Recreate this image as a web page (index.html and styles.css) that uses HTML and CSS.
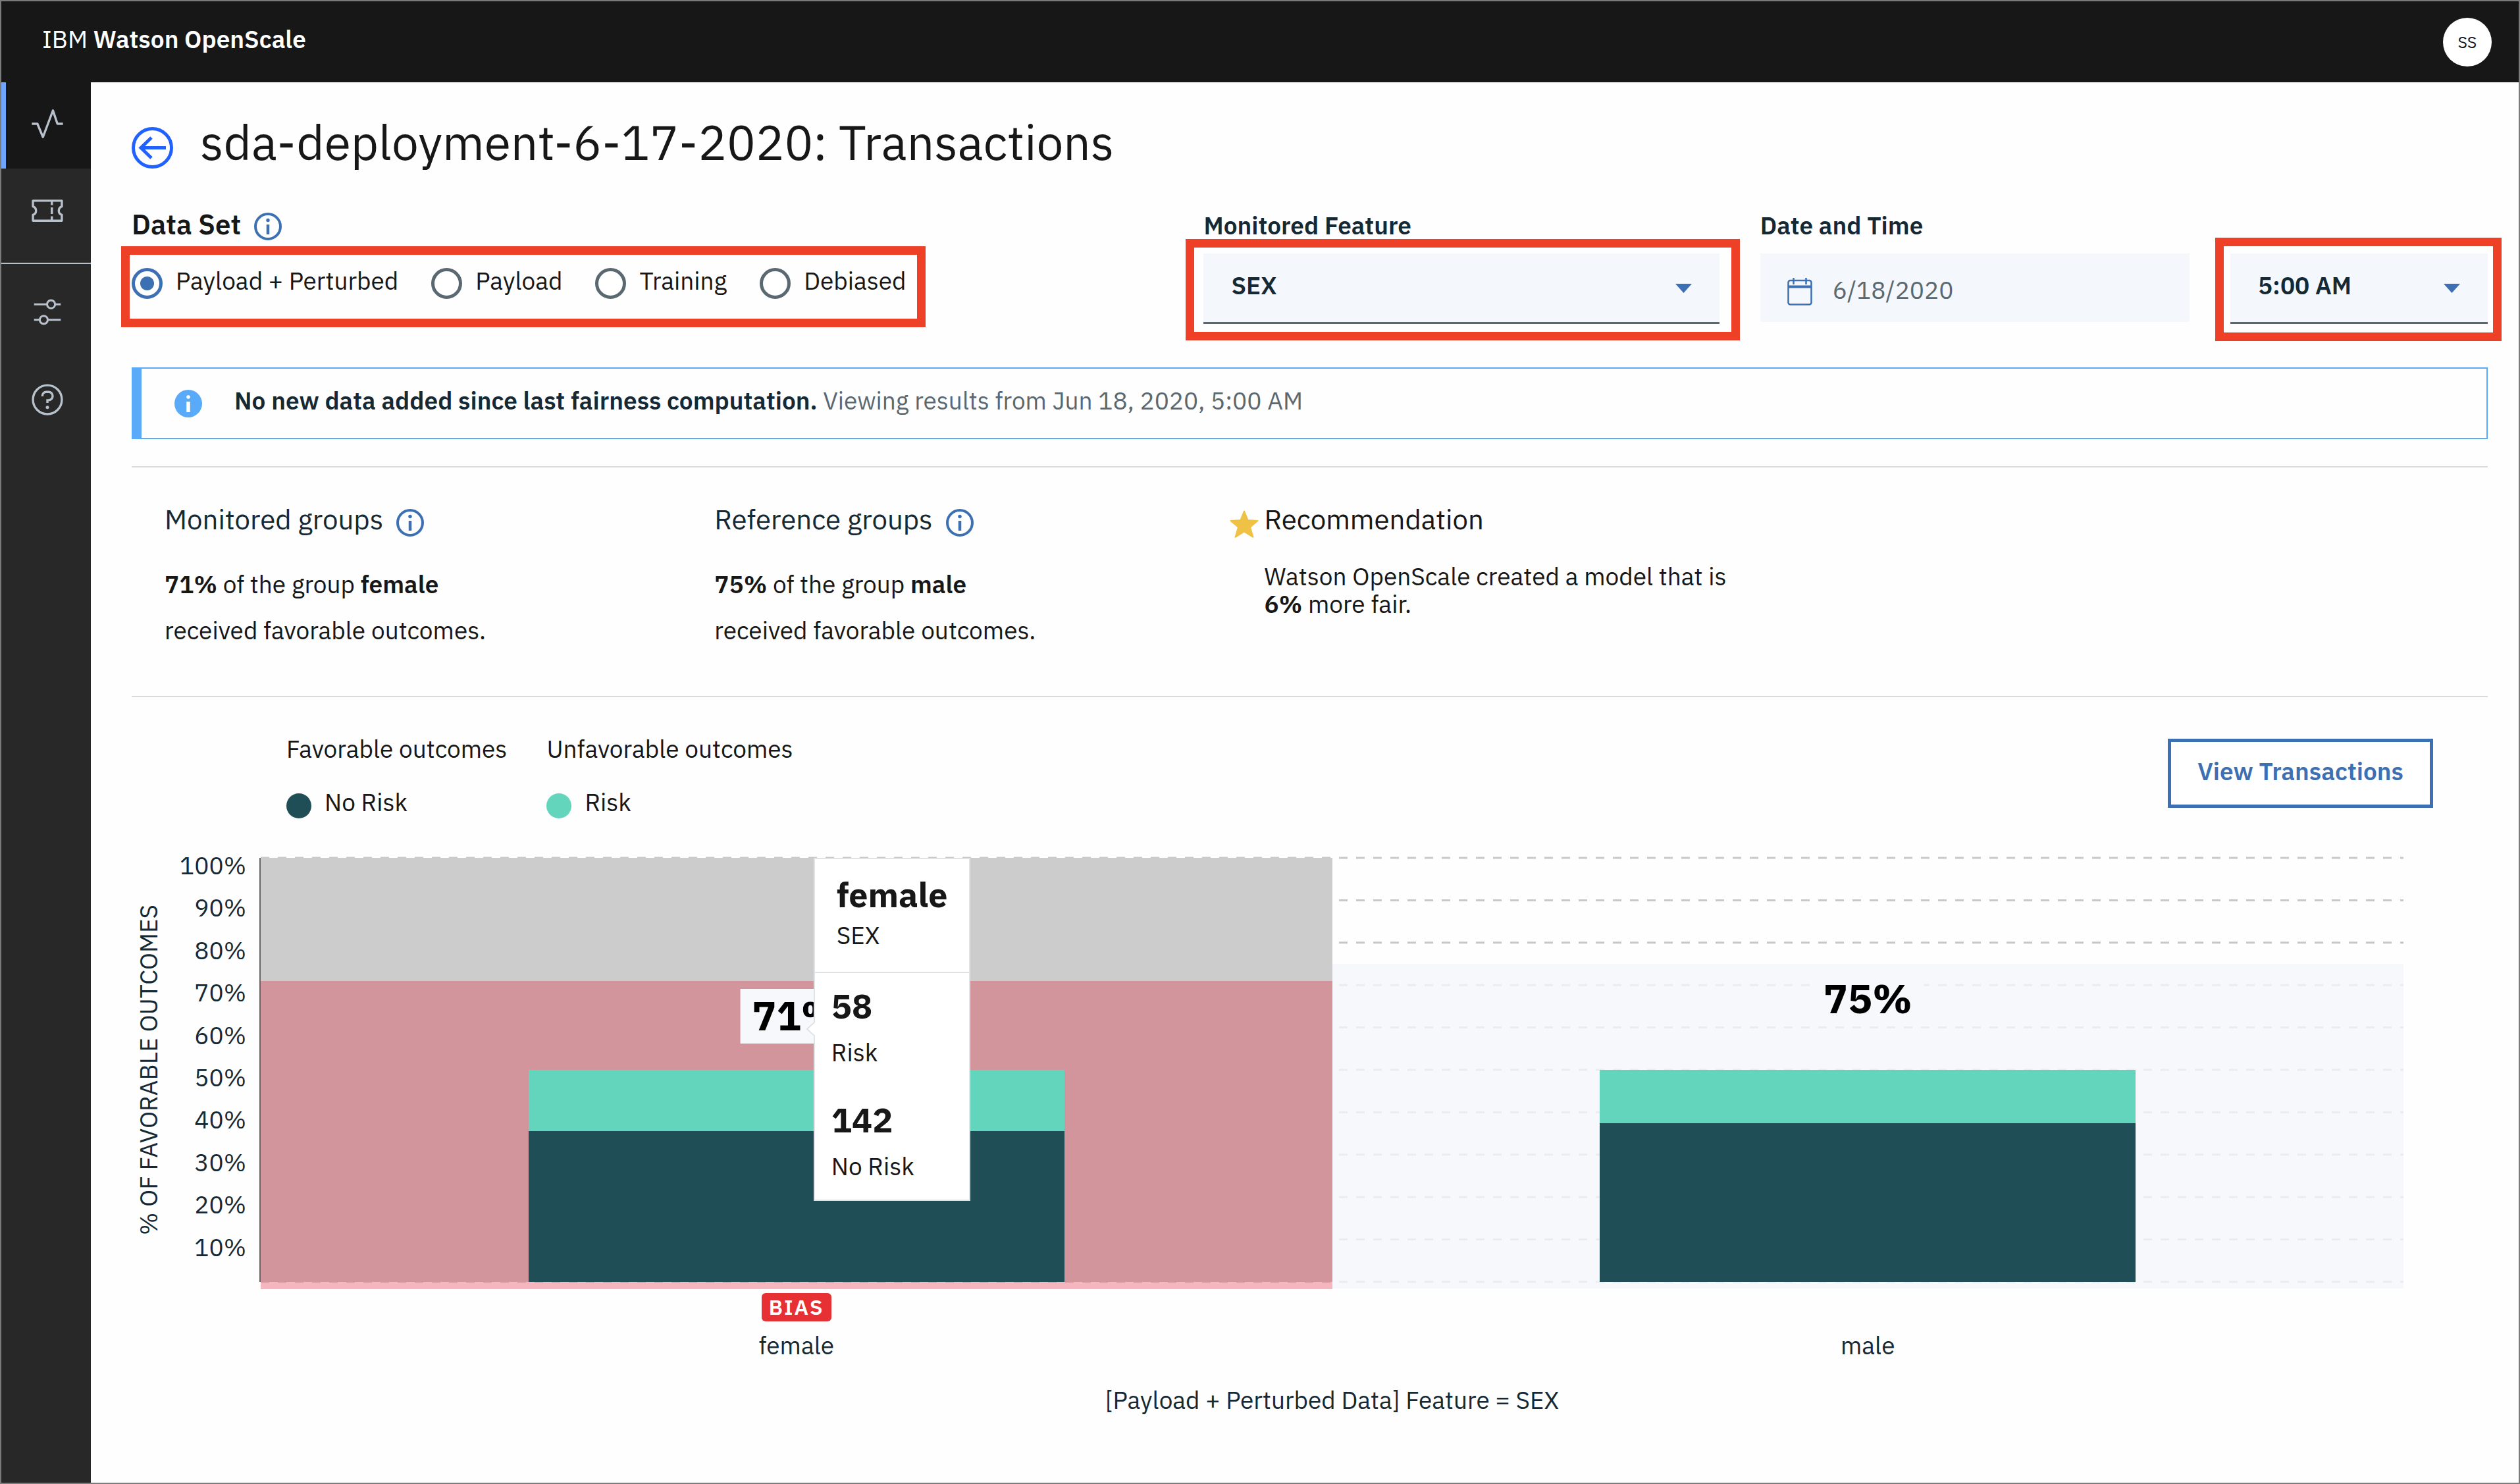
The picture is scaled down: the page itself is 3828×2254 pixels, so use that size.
FILE: index.html
```html
<!DOCTYPE html>
<html lang="en">
<head>
<meta charset="utf-8">
<title>IBM Watson OpenScale</title>
<link rel="stylesheet" href="styles.css">
</head>
<body>
<header class="topbar">
  <a class="brand" href="#">IBM <strong>Watson OpenScale</strong></a>
  <button class="avatar" type="button">SS</button>
</header>
<div class="shell">
  <nav class="sidebar" aria-label="Main">
    <a class="nav-item nav-item-active" href="#" aria-label="Insights">
      <svg class="nav-icon" viewBox="0 0 32 32"><path d="M2 16h5l5 12 9-24 4 12h5" fill="none" stroke="currentColor" stroke-width="2" stroke-linejoin="round"/></svg>
    </a>
    <a class="nav-item nav-item-tickets" href="#" aria-label="Tickets">
      <svg class="nav-icon" viewBox="0 0 32 32" fill="none" stroke="currentColor" stroke-width="2"><path d="M3 7h26v5.2a4 4 0 0 0 0 7.6V25H3v-5.2a4 4 0 0 0 0-7.6z" stroke-linejoin="round"/><path d="M20 7v4M20 13v6M20 21v4"/></svg>
    </a>
    <a class="nav-item nav-item-settings" href="#" aria-label="Configure">
      <svg class="nav-icon" viewBox="0 0 32 32" fill="none" stroke="currentColor" stroke-width="1.800"><path d="M4 9h11.500M23 9h5M4 23h5M16.500 23H28"/><circle cx="19.300" cy="9" r="3.600"/><circle cx="12.700" cy="23" r="3.600"/></svg>
    </a>
    <a class="nav-item nav-item-help" href="#" aria-label="Help">
      <svg class="nav-icon" viewBox="0 0 32 32"><circle cx="16" cy="16" r="13" fill="none" stroke="currentColor" stroke-width="2"/><path d="M11.500 13v-.5a3.500 3.500 0 0 1 3.500-3.500h2a3.500 3.500 0 0 1 0 7.500h-1V19" fill="none" stroke="currentColor" stroke-width="2"/><circle cx="16" cy="23" r="1.500" fill="currentColor"/></svg>
    </a>
  </nav>
  <main class="content">
    <div class="page-title">
      <a class="back" href="#" aria-label="Back"><svg viewBox="0 0 63 63" fill="none" stroke="currentColor" stroke-width="5"><circle cx="31.500" cy="31.500" r="29"/><path d="M52 31.500H13M30 16L14 31.500 30 47"/></svg></a>
      <h1 class="title">sda-deployment-6-17-2020: Transactions</h1>
    </div>

    <form class="filters">
      <div class="field" role="radiogroup" aria-labelledby="dataset-label">
        <div class="dataset-head">
          <span class="dataset-label" id="dataset-label">Data Set</span>
          <svg class="info" viewBox="0 0 42 42"><circle cx="21" cy="21" r="19" fill="none" stroke="currentColor" stroke-width="4"/><circle cx="21" cy="11.500" r="2.700" fill="currentColor"/><path d="M21 18v15" stroke="currentColor" stroke-width="4.500"/></svg>
        </div>
        <div class="radios">
          <label class="radio"><input type="radio" name="dataset" checked>Payload + Perturbed</label>
          <label class="radio"><input type="radio" name="dataset">Payload</label>
          <label class="radio"><input type="radio" name="dataset">Training</label>
          <label class="radio"><input type="radio" name="dataset">Debiased</label>
          <span class="callout callout-radios"></span>
        </div>
      </div>
      <div class="field">
        <label class="field-label" for="feature">Monitored Feature</label>
        <div class="select-wrap">
          <select class="select" id="feature"><option>SEX</option></select>
          <svg class="caret" viewBox="0 0 25 14"><path d="M0 0h25L12.500 14z" fill="currentColor"/></svg>
          <span class="callout callout-select"></span>
        </div>
      </div>
      <div class="field">
        <label class="field-label" for="date">Date and Time</label>
        <div class="date-box">
          <svg class="calendar" viewBox="0 0 38 42" fill="none" stroke="currentColor" stroke-width="2.500"><rect x="1.500" y="4" width="35" height="36.500" rx="3"/><path d="M2 13.500h34" stroke-width="4"/><path d="M9.500 0v10M28.500 0v10"/></svg>
          <input class="date-input" id="date" type="text" value="6/18/2020">
        </div>
      </div>
      <div class="field field-end">
        <div class="select-wrap">
          <select class="select" aria-label="Time"><option>5:00 AM</option></select>
          <svg class="caret" viewBox="0 0 25 14"><path d="M0 0h25L12.500 14z" fill="currentColor"/></svg>
          <span class="callout callout-time"></span>
        </div>
      </div>
    </form>

    <div class="notice" role="status">
      <svg class="notice-icon" viewBox="0 0 42 42"><circle cx="21" cy="21" r="21" fill="currentColor"/><circle cx="21" cy="11" r="2.800" fill="#fff"/><path d="M21 18v16" stroke="#fff" stroke-width="5.500"/></svg>
      <p class="notice-text"><strong>No new data added since last fairness computation.</strong> Viewing results from Jun 18, 2020, 5:00 AM</p>
    </div>

    <section class="summary">
      <div>
        <h2 class="summary-title">Monitored groups
          <svg class="info" viewBox="0 0 42 42"><circle cx="21" cy="21" r="19" fill="none" stroke="currentColor" stroke-width="4"/><circle cx="21" cy="11.500" r="2.700" fill="currentColor"/><path d="M21 18v15" stroke="currentColor" stroke-width="4.500"/></svg>
        </h2>
        <p class="summary-text"><strong>71%</strong> of the group <strong>female</strong><br>received favorable outcomes.</p>
      </div>
      <div>
        <h2 class="summary-title">Reference groups
          <svg class="info" viewBox="0 0 42 42"><circle cx="21" cy="21" r="19" fill="none" stroke="currentColor" stroke-width="4"/><circle cx="21" cy="11.500" r="2.700" fill="currentColor"/><path d="M21 18v15" stroke="currentColor" stroke-width="4.500"/></svg>
        </h2>
        <p class="summary-text"><strong>75%</strong> of the group <strong>male</strong><br>received favorable outcomes.</p>
      </div>
      <div class="recommendation">
        <svg class="star" viewBox="0 0 44 42"><path d="M22 1.500l5.500 13.500 15 1-11.500 9.800 4.500 15L22 32.500 8.500 40.800l4.500-15L1.500 16l15-1z" fill="currentColor" stroke="currentColor" stroke-width="2" stroke-linejoin="round"/></svg>
        <div>
          <h2 class="summary-title summary-title-dark">Recommendation</h2>
          <p class="recommendation-text">Watson OpenScale created a model that is<br><strong>6%</strong> more fair.</p>
        </div>
      </div>
    </section>

    <section class="results">
      <div class="results-head">
        <dl class="legend">
          <div><dt>Favorable outcomes</dt><dd><span class="dot dot-no-risk"></span>No Risk</dd></div>
          <div><dt>Unfavorable outcomes</dt><dd><span class="dot dot-risk"></span>Risk</dd></div>
        </dl>
        <button class="view-button" type="button">View Transactions</button>
      </div>

      <div class="chart">
        <div class="y-title">% OF FAVORABLE OUTCOMES</div>
        <div class="y-labels"><span>100%</span><span>90%</span><span>80%</span><span>70%</span><span>60%</span><span>50%</span><span>40%</span><span>30%</span><span>20%</span><span>10%</span></div>
        <div class="plot">
          <svg class="gridlines" aria-hidden="true">
            <line x1="0" x2="100%" y1="0" y2="0"/><line x1="0" x2="100%" y1="10%" y2="10%"/><line x1="0" x2="100%" y1="20%" y2="20%"/><line x1="0" x2="100%" y1="30%" y2="30%"/><line x1="0" x2="100%" y1="40%" y2="40%"/><line x1="0" x2="100%" y1="50%" y2="50%"/><line x1="0" x2="100%" y1="60%" y2="60%"/><line x1="0" x2="100%" y1="70%" y2="70%"/><line x1="0" x2="100%" y1="80%" y2="80%"/><line x1="0" x2="100%" y1="90%" y2="90%"/><line x1="0" x2="100%" y1="100%" y2="100%"/>
          </svg>
          <div class="column column-hover">
            <div class="band band-bias" style="height:71%"></div>
            <div class="band-foot"></div>
            <div class="bar">
              <div class="bar-risk" style="height:14.5%"></div>
              <div class="bar-no-risk" style="height:35.5%"></div>
            </div>
            <div class="score score-female">71%</div>
            <div class="tooltip" role="tooltip">
              <div class="tip-head"><div class="tip-value">female</div><div class="tip-label">SEX</div></div>
              <div class="tip-row"><div class="tip-value">58</div><div class="tip-label">Risk</div></div>
              <div class="tip-row"><div class="tip-value">142</div><div class="tip-label">No Risk</div></div>
              <svg class="tip-arrow" viewBox="0 0 14 24"><path d="M14 1L2 12l12 11" fill="#fff" stroke="#dfe3e6" stroke-width="2"/></svg>
            </div>
          </div>
          <div class="column">
            <div class="band band-plain" style="height:75%"></div>
            <div class="bar">
              <div class="bar-risk" style="height:12.5%"></div>
              <div class="bar-no-risk" style="height:37.5%"></div>
            </div>
            <div class="score score-male">75%</div>
          </div>
        </div>
        <div class="x-labels">
          <div class="x-label"><span class="bias">BIAS</span><span>female</span></div>
          <div class="x-label"><span>male</span></div>
        </div>
        <div class="x-title">[Payload + Perturbed Data] Feature = SEX</div>
      </div>
    </section>
  </main>
</div>
</body>
</html>
```
FILE: styles.css
```css
* { box-sizing: border-box; }
body {
  margin: 0;
  min-height: 100vh;
  display: flex;
  flex-direction: column;
  border: 2px solid #7b7b7b;
  background: #fefefe;
  color: #171717;
  font-family: "IBM Plex Sans", "Open Sans", sans-serif;
  font-size: 37px;
}
h1, h2, p, dl, dd { margin: 0; font-weight: 400; }
strong { font-weight: 600; }
a { color: inherit; text-decoration: none; }
svg { display: block; flex: none; }
button, input, select { font: inherit; }

.topbar {
  height: 123px;
  display: flex;
  align-items: center;
  justify-content: space-between;
  padding: 0 41px 0 62px;
  background: #171717;
  color: #fff;
}
.brand { line-height: 50px; padding-bottom: 9px; }
.avatar {
  width: 74px;
  height: 74px;
  padding: 0;
  border: 0;
  border-radius: 50%;
  background: #fff;
  color: #171717;
  font-size: 25px;
}

.shell { flex: 1; display: flex; }
.sidebar { width: 136px; background: #282828; color: #b8c1cb; flex: none; }
.nav-item { display: flex; align-items: center; justify-content: center; padding-left: 3px; }
.nav-icon { width: 54px; height: 54px; }
.nav-item-active { height: 131px; padding: 0 4px 6px 0; border-left: 7px solid #6ea6ff; background: #171717; }
.nav-item-tickets { height: 145px; padding-bottom: 16px; border-bottom: 2px solid #b8c1cb; }
.nav-item-settings { height: 146px; }
.nav-item-help { height: 120px; }

.content { flex: 1; padding: 51px 47px 60px 62px; }
.page-title { display: flex; gap: 41px; }
.back { width: 63px; height: 63px; margin-top: 17px; color: #1f62ff; }
.title { font-size: 73px; line-height: 80px; }

.filters {
  display: grid;
  grid-template-columns: 1566fr 783fr 652fr 391fr;
  gap: 62px;
  margin-top: 60px;
}
.dataset-head { display: flex; gap: 20px; }
.dataset-label { font-size: 42px; font-weight: 600; line-height: 50px; }
.info { width: 42px; height: 42px; color: #3d70b2; }
.dataset-head .info { margin-top: 7px; }
.radios { position: relative; display: flex; gap: 50px; margin-top: 36px; width: max-content; }
.radio { display: flex; gap: 20px; line-height: 48px; }
.radio input {
  appearance: none;
  width: 47px;
  height: 47px;
  margin: 5px 0 0;
  border: 5px solid #5a6872;
  border-radius: 50%;
  background: #fff;
}
.radio input:checked {
  border-color: #3d70b2;
  background: radial-gradient(circle, #3d70b2 10px, #fff 11px);
}
.callout { position: absolute; border: 13px solid #ee4026; pointer-events: none; }
.callout-radios { inset: -28px -29px -43px -16px; }
.callout-select { inset: -22px -31px -25px -27px; }
.callout-time { inset: -24px -21px -26px -23px; }

.field-label { display: block; font-weight: 600; line-height: 52px; color: #152935; }
.field-end { padding-top: 52px; }
.select-wrap { position: relative; margin-top: 17px; }
.select {
  appearance: none;
  display: block;
  width: 100%;
  height: 107px;
  padding: 0 42px 8px;
  border: 0;
  border-bottom: 3px solid #5a6872;
  border-radius: 0;
  background: #f4f7fb;
  color: #152935;
  font-weight: 600;
}
.caret { position: absolute; right: 42px; top: 46px; width: 25px; height: 14px; color: #3d70b2; }
.date-box {
  display: flex;
  align-items: center;
  gap: 31px;
  height: 104px;
  margin-top: 17px;
  padding: 5px 41px 0;
  background: #f4f7fb;
}
.calendar { width: 38px; height: 42px; margin-top: 7px; color: #3d70b2; }
.date-input {
  flex: 1;
  min-width: 0;
  padding: 0;
  border: 0;
  background: none;
  color: #5a6872;
}

.notice {
  display: flex;
  align-items: center;
  gap: 49px;
  height: 109px;
  margin-top: 66px;
  padding-left: 50px;
  border: 2px solid #5aaafa;
  border-left-width: 15px;
  color: #5a6872;
}
.notice-icon { width: 42px; height: 42px; color: #5aaafa; }
.notice-text { line-height: 50px; padding-bottom: 9px; }
.notice-text strong { color: #152935; }

.summary {
  display: grid;
  grid-template-columns: 835fr 783fr 1910fr;
  margin-top: 41px;
  padding: 49px 0 65px 50px;
  border: solid #dadada;
  border-width: 2px 0;
}
.summary-title { display: flex; gap: 20px; font-size: 42px; line-height: 60px; color: #152935; }
.summary-title .info { margin-top: 14px; }
.summary-title-dark { color: #171717; }
.summary-text { margin-top: 33px; line-height: 70px; }
.recommendation { display: flex; gap: 8px; }
.star { width: 44px; height: 42px; margin-top: 16px; color: #efc144; }
.recommendation-text { margin-top: 35px; line-height: 42px; }

.results-head { display: flex; align-items: flex-start; justify-content: space-between; margin-top: 53px; }
.legend { display: flex; gap: 60px; padding-left: 235px; line-height: 50px; }
.legend dd { display: flex; gap: 20px; margin-top: 31px; }
.dot { width: 38px; height: 38px; margin-top: 12px; border-radius: 50%; }
.dot-no-risk { background: #1f4e56; }
.dot-risk { background: #62d5bc; }
.view-button {
  height: 105px;
  margin: 10px 83px 0 0;
  padding: 0 40px 8px;
  border: 5px solid #3d70b2;
  background: #fff;
  color: #3d70b2;
  font-weight: 600;
}

.chart {
  display: grid;
  grid-template-columns: 50px 146px 1fr;
  margin: 60px 128px 0 0;
  color: #152935;
}
.y-title {
  writing-mode: vertical-rl;
  transform: rotate(180deg);
  align-self: center;
  line-height: 50px;
  white-space: nowrap;
}
.y-labels {
  display: grid;
  grid-auto-rows: 1fr;
  padding-right: 22px;
  text-align: right;
  line-height: 22px;
}
.plot { position: relative; display: flex; height: 644px; box-shadow: -2px 0 #666; }
.gridlines {
  position: absolute;
  inset: 0;
  width: 100%;
  height: 100%;
  overflow: visible;
  stroke: #c8c8c8;
  stroke-width: 3px;
  stroke-dasharray: 13px;
}
.column { position: relative; flex: 1; display: flex; justify-content: center; align-items: flex-end; }
.column-hover { background: #ccc; }
.band { position: absolute; left: 0; right: 0; bottom: 0; }
.band-bias { background: #d2959b; }
.band-foot { position: absolute; left: 0; right: 0; bottom: -11px; height: 11px; background: rgba(238, 122, 138, .55); }
.band-plain { background: rgba(243, 246, 251, .78); bottom: -10px; box-sizing: content-box; padding-bottom: 10px; }
.bar { position: relative; display: flex; flex-direction: column; justify-content: flex-end; width: 50%; height: 100%; }
.bar-risk { background: #62d5bc; }
.bar-no-risk { background: #1f4e56; }
.score {
  position: absolute;
  left: 50%;
  transform: translateX(-50%);
  padding: 0 18px 4px;
  background: #f6f8fc;
  color: #000;
  font-size: 62px;
  font-weight: 700;
  line-height: 79px;
}
.score-female { top: 199px; }
.score-male { top: 173px; }
.tooltip {
  position: absolute;
  left: calc(50% + 26px);
  top: 0;
  width: 238px;
  height: 521px;
  border: 2px solid #dfe3e6;
  background: #fff;
  color: #171717;
}
.tip-head { height: 173px; padding: 24px 0 0 33px; border-bottom: 2px solid #dfe3e6; }
.tip-row { height: 173px; padding: 20px 0 0 25px; }
.tip-value { font-size: 52px; font-weight: 700; line-height: 60px; }
.tip-label { padding-top: 7px; line-height: 48px; }
.tip-row .tip-label { padding-top: 16px; }
.tip-arrow { position: absolute; left: -14px; top: 246px; width: 14px; height: 24px; }

.x-labels { grid-column: 3; display: flex; height: 121px; }
.x-label { flex: 1; display: flex; flex-direction: column; align-items: center; justify-content: flex-end; line-height: 50px; }
.bias {
  margin-bottom: 11px;
  padding: 0 11px;
  border-radius: 6px;
  background: #e73034;
  color: #fff;
  font-size: 32px;
  font-weight: 600;
  line-height: 43px;
  letter-spacing: 2px;
}
.x-title { grid-column: 3; margin-top: 33px; text-align: center; line-height: 50px; }
```
